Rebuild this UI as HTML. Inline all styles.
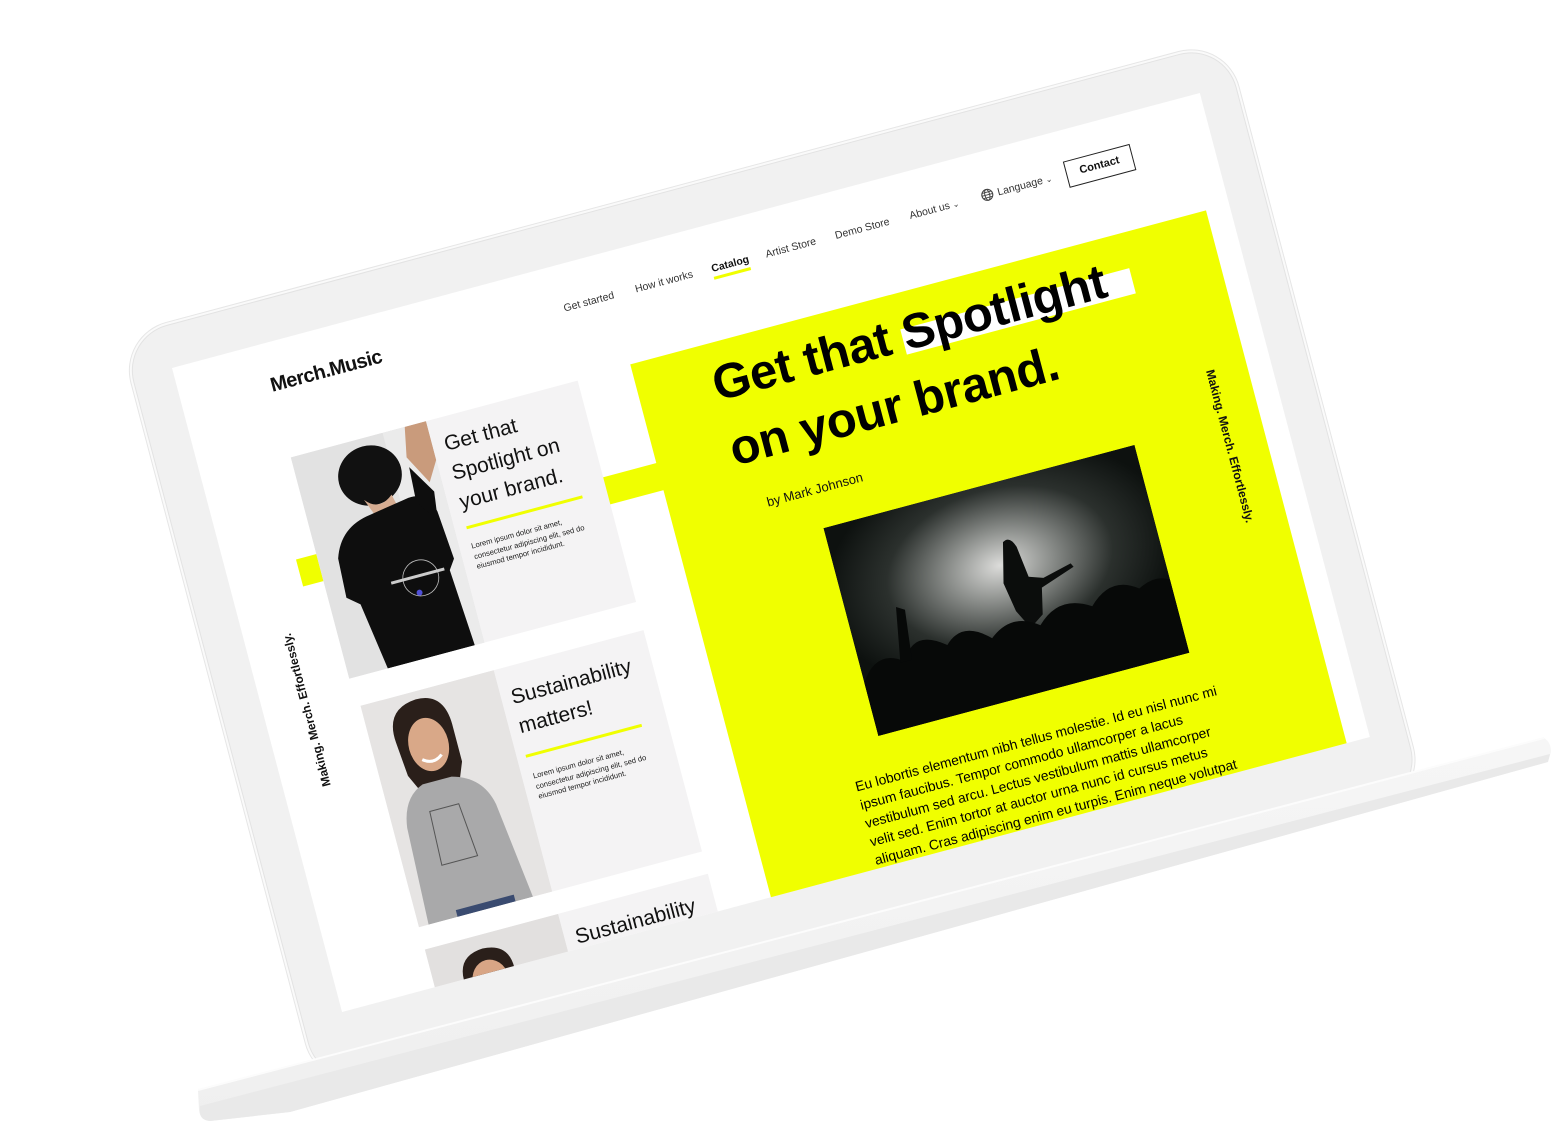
<!DOCTYPE html>
<html><head><meta charset="utf-8">
<style>
html,body{margin:0;padding:0;background:#fff;}
body{width:1555px;height:1137px;position:relative;overflow:hidden;font-family:"Liberation Sans",sans-serif;color:#111;}
#wrap{position:absolute;left:172px;top:368px;width:0;height:0;transform-origin:0 0;transform:matrix(0.966,-0.2585,0.2553,0.967,0,0);}
#bezel{position:absolute;left:-40px;top:-42px;width:1140px;height:775px;background:#f1f1f1;border-radius:46px;box-shadow:0 0 0 1px #e3e3e3, 0 0 0 3px #fafafa, 0 0 0 4px #e6e6e6;}
#scr{position:absolute;left:0;top:0;width:1064px;height:666px;background:#fff;overflow:hidden;}
.a{position:absolute;white-space:nowrap;}
.nav{font-size:10.5px;color:#333;}
.card{position:absolute;background:#f4f3f4;}
.ch{position:absolute;font-size:21px;line-height:30px;color:#111;}
.ul{position:absolute;height:3px;background:#f0ff00;}
.cp{position:absolute;font-size:7.6px;line-height:10.5px;color:#222;}
</style></head><body>

<div id="wrap">
  <div id="bezel"></div>
  <div id="scr">
    <div class="a" style="left:91px;top:32px;font-size:20px;font-weight:bold;letter-spacing:-0.6px;">Merch.Music</div>
    <div class="a nav" style="left:394px;top:38px;">Get started</div>
    <div class="a nav" style="left:468px;top:38px;">How it works</div>
    <div class="a nav" style="left:547px;top:38px;font-weight:bold;color:#111;">Catalog</div>
    <div class="a" style="left:547px;top:52px;width:38px;height:3px;background:#f0ff00;"></div>
    <div class="a nav" style="left:603px;top:38px;">Artist Store</div>
    <div class="a nav" style="left:675px;top:38px;">Demo Store</div>
    <div class="a nav" style="left:752px;top:38px;">About us <span style="font-size:8px">&#8964;</span></div>
    <svg class="a" style="left:826px;top:37px" width="13" height="13" viewBox="0 0 13 13"><circle cx="6.5" cy="6.5" r="5.5" fill="none" stroke="#444" stroke-width="1.1"/><ellipse cx="6.5" cy="6.5" rx="2.4" ry="5.5" fill="none" stroke="#444" stroke-width="1"/><path d="M1 6.5h11M2 3.8h9M2 9.2h9" stroke="#444" stroke-width="0.9"/></svg>
    <div class="a nav" style="left:843px;top:38px;">Language <span style="font-size:8px">&#8964;</span></div>
    <div class="a" style="left:914px;top:31px;width:69px;height:27px;border:1.6px solid #222;box-sizing:border-box;font-size:11px;font-weight:bold;text-align:center;line-height:24px;">Contact</div>

    <div class="a" style="left:71px;top:217px;width:380px;height:28px;background:#f0ff00;"></div>
    <div class="a" style="left:444px;top:115px;width:596px;height:600px;background:#f0ff00;"></div>

    <div class="a" style="left:36px;top:268px;height:176px;writing-mode:vertical-rl;transform:rotate(180deg);font-size:12px;font-weight:bold;">Making. Merch. Effortlessly.</div>
    <div class="a" style="left:996px;top:270px;height:176px;writing-mode:vertical-rl;font-size:12px;font-weight:bold;">Making. Merch. Effortlessly.</div>

    <div class="card" style="left:92px;top:117px;width:297px;height:229px;"></div>
    <svg class="a" style="left:92px;top:117px" width="140" height="229" viewBox="0 0 140 229">
      <rect width="140" height="229" fill="#e2e2e2"/>
      <rect x="95" y="0" width="45" height="229" fill="#ebebeb"/>
      <path d="M118 0 L140 0 L140 40 L128 60 L112 30 Z" fill="#c99b7c"/>
      <ellipse cx="72" cy="38" rx="32" ry="30" fill="#111"/>
      <path d="M60 60 Q72 75 88 62 L92 80 L70 86 Z" fill="#d6ad92"/>
      <path d="M20 110 Q30 80 62 76 L100 70 Q122 66 128 90 L132 140 L125 150 L130 229 L40 229 L30 160 L18 150 Z" fill="#0e0e0e"/>
      <path d="M112 40 L130 70 L126 100 L110 75 Z" fill="#0e0e0e"/>
      <circle cx="95" cy="150" r="18" fill="none" stroke="#bbb" stroke-width="0.8"/>
      <rect x="65" y="146" width="55" height="3" fill="#ccc"/>
      <circle cx="90" cy="164" r="3" fill="#5050d8"/>
    </svg>
    <div class="ch" style="left:244px;top:130px;">Get that<br>Spotlight on<br>your brand.</div>
    <div class="ul" style="left:244px;top:229px;width:120px;"></div>
    <div class="cp" style="left:244px;top:245px;">Lorem ipsum dolor sit amet,<br>consectetur adipiscing elit, sed do<br>eiusmod tempor incididunt.</div>

    <div class="card" style="left:96px;top:375px;width:293px;height:229px;"></div>
    <svg class="a" style="left:96px;top:375px" width="138" height="229" viewBox="0 0 138 229">
      <rect width="138" height="229" fill="#e6e4e3"/>
      <path d="M25 45 Q22 10 55 8 Q85 8 84 45 L84 80 L78 95 L35 95 L28 80 Z" fill="#2a1f1a"/>
      <ellipse cx="56" cy="55" rx="20" ry="27" fill="#d9a888"/>
      <path d="M46 68 Q56 76 66 68" stroke="#fff" stroke-width="3" fill="none"/>
      <path d="M10 229 L14 130 Q18 100 40 92 L70 92 Q100 100 106 130 L118 229 Z" fill="#a9a9aa"/>
      <path d="M40 120 L70 120 L75 175 L38 175 Z" fill="none" stroke="#555" stroke-width="1"/>
      <rect x="40" y="222" width="60" height="7" fill="#3a4b70"/>
    </svg>
    <div class="ch" style="left:244px;top:392px;">Sustainability<br>matters!</div>
    <div class="ul" style="left:243px;top:465px;width:120px;"></div>
    <div class="cp" style="left:245px;top:483px;">Lorem ipsum dolor sit amet,<br>consectetur adipiscing elit, sed do<br>eiusmod tempor incididunt.</div>

    <div class="card" style="left:96px;top:627px;width:293px;height:229px;"></div>
    <svg class="a" style="left:96px;top:627px" width="138" height="60" viewBox="0 0 138 60">
      <rect width="138" height="60" fill="#e2e0df"/>
      <path d="M30 40 Q30 15 56 14 Q82 15 82 40 L82 60 L30 60 Z" fill="#2a1f1a"/>
      <ellipse cx="56" cy="46" rx="18" ry="20" fill="#d8a585"/>
    </svg>
    <div class="ch" style="left:245px;top:640px;">Sustainability</div>

    <div class="a" style="left:714px;top:151px;width:237px;height:26px;background:#fff;"></div>
    <div class="a" style="left:519px;top:124px;font-size:49px;line-height:67px;font-weight:bold;letter-spacing:-0.3px;color:#000;">Get that Spotlight<br>on your brand.</div>
    <div class="a" style="left:541px;top:276px;font-size:13px;color:#111;">by Mark Johnson</div>

    <svg class="a" style="left:589px;top:323px" width="322" height="215" viewBox="0 0 322 215">
      <defs>
        <radialGradient id="sm" cx="0.5" cy="0.38" r="0.55">
          <stop offset="0" stop-color="#dcdcda"/>
          <stop offset="0.3" stop-color="#8a8d8a"/>
          <stop offset="0.65" stop-color="#2b302d"/>
          <stop offset="1" stop-color="#0d110f"/>
        </radialGradient>
      </defs>
      <rect width="322" height="215" fill="url(#sm)"/>
      <path d="M170 60 Q178 55 182 68 L186 100 L200 105 L230 98 L232 102 L196 114 L190 140 L175 150 L165 130 L160 100 Z" fill="#0b0d0c"/>
      <path d="M0 215 L0 160 Q20 130 45 150 Q60 120 90 145 Q110 125 135 150 Q160 130 185 150 Q210 125 240 145 Q265 120 290 140 Q310 130 322 140 L322 215 Z" fill="#070908"/>
      <path d="M40 150 L50 95 L58 100 L52 150 Z" fill="#070908"/>
    </svg>

    <div class="a" style="left:554px;top:572px;font-size:13.8px;line-height:19px;color:#000;">Eu lobortis elementum nibh tellus molestie. Id eu nisl nunc mi<br>ipsum faucibus. Tempor commodo ullamcorper a lacus<br>vestibulum sed arcu. Lectus vestibulum mattis ullamcorper<br>velit sed. Enim tortor at auctor urna nunc id cursus metus<br>aliquam. Cras adipiscing enim eu turpis. Enim neque volutpat</div>
  </div>
</div>

<svg style="position:absolute;left:0;top:0" width="1555" height="1137" viewBox="0 0 1555 1137">
  <defs>
    <linearGradient id="bg1" x1="0" y1="0" x2="0" y2="1">
      <stop offset="0" stop-color="#f6f6f6"/>
      <stop offset="1" stop-color="#efefef"/>
    </linearGradient>
  </defs>
  <path d="M762 948 L980 890 Q984 905 972 912 L780 962 Q765 962 762 948 Z" fill="#f5f5f5" stroke="#e8e8e8" stroke-width="1"/>
  <path d="M198 1090 L1544 738 Q1551 742 1551 752 L1548 762 L290 1112 L210 1121 Q200 1120 199 1110 Z" fill="url(#bg1)"/>
  <path d="M200 1106 L1550 754 L1548 762 L290 1112 L210 1121 Q200 1120 200 1112 Z" fill="#e9e9e9"/>
  <path d="M198 1090 L1544 738" stroke="#fcfcfc" stroke-width="2"/>
</svg>
</body></html>
